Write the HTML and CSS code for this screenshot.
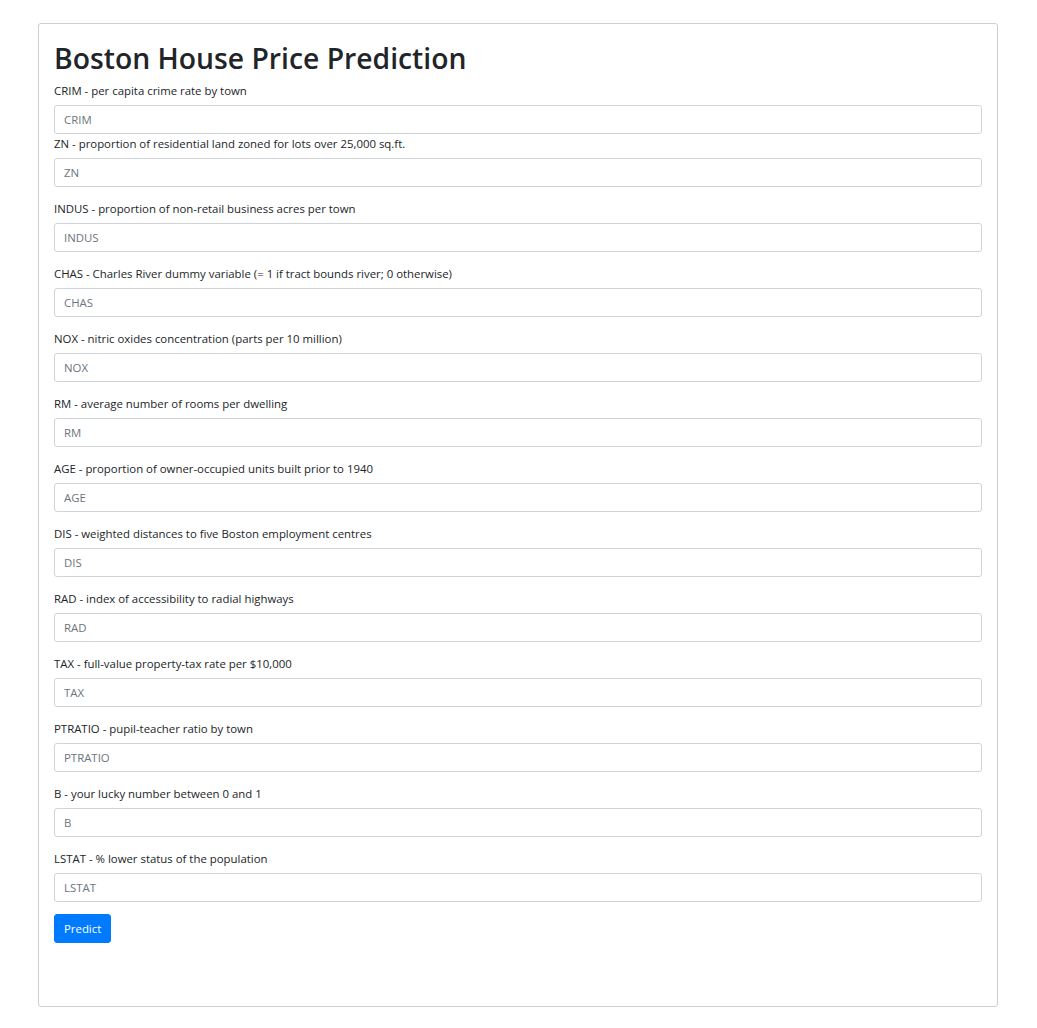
FILE: index.html
```html
<!DOCTYPE html>
<html lang="en">
<head>
<meta charset="utf-8">
<title>Boston House Price Prediction</title>
<link rel="stylesheet" href="styles.css">
</head>
<body>
<div class="card">
  <h1 class="title">Boston House Price Prediction</h1>
  <form class="form">
    <label class="label" for="crim">CRIM - per capita crime rate by town</label>
    <input class="input" id="crim" placeholder="CRIM">
    <div class="group">
      <label class="label" for="zn">ZN - proportion of residential land zoned for lots over 25,000 sq.ft.</label>
      <input class="input" id="zn" placeholder="ZN">
    </div>
    <div class="group">
      <label class="label" for="indus">INDUS - proportion of non-retail business acres per town</label>
      <input class="input" id="indus" placeholder="INDUS">
    </div>
    <div class="group">
      <label class="label" for="chas">CHAS - Charles River dummy variable (= 1 if tract bounds river; 0 otherwise)</label>
      <input class="input" id="chas" placeholder="CHAS">
    </div>
    <div class="group">
      <label class="label" for="nox">NOX - nitric oxides concentration (parts per 10 million)</label>
      <input class="input" id="nox" placeholder="NOX">
    </div>
    <div class="group">
      <label class="label" for="rm">RM - average number of rooms per dwelling</label>
      <input class="input" id="rm" placeholder="RM">
    </div>
    <div class="group">
      <label class="label" for="age">AGE - proportion of owner-occupied units built prior to 1940</label>
      <input class="input" id="age" placeholder="AGE">
    </div>
    <div class="group">
      <label class="label" for="dis">DIS - weighted distances to five Boston employment centres</label>
      <input class="input" id="dis" placeholder="DIS">
    </div>
    <div class="group">
      <label class="label" for="rad">RAD - index of accessibility to radial highways</label>
      <input class="input" id="rad" placeholder="RAD">
    </div>
    <div class="group">
      <label class="label" for="tax">TAX - full-value property-tax rate per $10,000</label>
      <input class="input" id="tax" placeholder="TAX">
    </div>
    <div class="group">
      <label class="label" for="ptratio">PTRATIO - pupil-teacher ratio by town</label>
      <input class="input" id="ptratio" placeholder="PTRATIO">
    </div>
    <div class="group">
      <label class="label" for="b">B - your lucky number between 0 and 1</label>
      <input class="input" id="b" placeholder="B">
    </div>
    <div class="group">
      <label class="label" for="lstat">LSTAT - % lower status of the population</label>
      <input class="input" id="lstat" placeholder="LSTAT">
    </div>
    <div class="actions">
      <button type="button" class="btn">Predict</button>
    </div>
  </form>
</div>
</body>
</html>
```

FILE: styles.css
```css
* { box-sizing: border-box; }
html, body { margin: 0; padding: 0; background: #fff; }
body {
  font-family: "Open Sans", "Noto Sans", "Liberation Sans", sans-serif;
  color: #212529;
  font-size: 11.4px;
  line-height: 18px;
  padding-top: 23px;
}
.card {
  width: 960px;
  margin: 0 0 0 38px;
  border: 1px solid #cfcfcf;
  border-radius: 3px;
  padding: 15px 15px 63px 15px;
  min-height: 984px;
}
.title {
  margin: 0 0 6px 0;
  padding-top: 1px;
  height: 36px;
  font-size: 28.3px;
  line-height: 36px;
  font-weight: 600;
  color: #212529;
}
.form { display: block; }
.label {
  display: block;
  margin-bottom: 6px;
  padding-top: 1px;
  height: 18px;
  font-size: 11.4px;
  line-height: 18px;
  color: #212529;
}
.input {
  display: block;
  width: 100%;
  height: 29px;
  padding: 0 9px;
  border: 1px solid #ced4da;
  border-radius: 3px;
  font-family: inherit;
  font-size: 11.4px;
  color: #495057;
  background: #fff;
  outline: none;
}
.input::placeholder { color: #6c757d; opacity: 1; }
.group { margin-bottom: 12px; }
.btn {
  display: inline-block;
  height: 29px;
  padding: 0 9px;
  border: 1px solid #007bff;
  border-radius: 3px;
  background: #007bff;
  color: #fff;
  font-family: inherit;
  font-size: 11.4px;
  line-height: 27px;
  cursor: pointer;
}
```
